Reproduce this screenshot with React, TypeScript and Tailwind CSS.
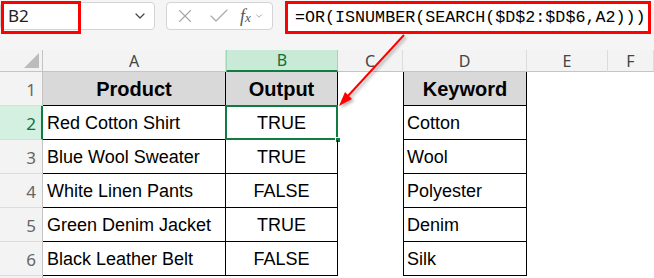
import { ChevronDown, X, Check } from 'lucide-react';

type Row = { product: string; output: string; keyword: string };

const rows: Row[] = [
  { product: 'Red Cotton Shirt', output: 'TRUE', keyword: 'Cotton' },
  { product: 'Blue Wool Sweater', output: 'TRUE', keyword: 'Wool' },
  { product: 'White Linen Pants', output: 'FALSE', keyword: 'Polyester' },
  { product: 'Green Denim Jacket', output: 'TRUE', keyword: 'Denim' },
  { product: 'Black Leather Belt', output: 'FALSE', keyword: 'Silk' },
];

const ui = { fontFamily: '"Noto Sans", "Open Sans", sans-serif' };
const cell = { fontFamily: '"Liberation Sans", Arial, sans-serif' };
const mono = { fontFamily: '"Liberation Mono", "DejaVu Sans Mono", monospace' };

function Toolbar() {
  return (
    <div className="flex h-[50px] items-start bg-[#f5f5f5] pt-[2px]" style={ui}>
      <div className="relative flex h-[28px] w-[155px] items-center justify-between rounded-[4px] border border-[#d4d4d4] bg-white pl-[7px] pr-[6px]">
        <span className="text-[17px] text-[#222]">B2</span>
        <ChevronDown className="h-[16px] w-[16px] text-[#444]" strokeWidth={1.8} />
        <div className="absolute left-0 top-[-2px] h-[33px] w-[80px] border-[3px] border-[#ff0000]" />
      </div>
      <div className="ml-[11px] flex h-[28px] w-[107px] items-center rounded-[4px] border border-[#d4d4d4] bg-white pl-[7px]">
        <X className="h-[22px] w-[22px] text-[#a6a6a6]" strokeWidth={1.2} />
        <Check className="ml-[11px] h-[24px] w-[24px] text-[#a6a6a6]" strokeWidth={1.1} />
        <span className="ml-[9px] text-[18px] italic text-[#555]" style={{ fontFamily: '"Liberation Serif", serif' }}>
          f<span className="text-[13px]">x</span>
        </span>
        <ChevronDown className="ml-[3px] h-[10px] w-[10px] text-[#999]" strokeWidth={2} />
      </div>
      <div className="ml-[12px] flex h-[33px] w-[366px] -translate-y-[1px] items-center border-[3px] border-[#ff0000] bg-white pl-[7px]">
        <span className="text-[16.7px] text-black" style={mono}>=OR(ISNUMBER(SEARCH($D$2:$D$6,A2)))</span>
      </div>
    </div>
  );
}

function ColumnHeaders() {
  const letters = ['A', 'B', 'C', 'D', 'E', 'F'];
  return (
    <>
      <div className="relative h-[22px] border-b border-r border-[#c4c4c4] bg-[#f3f3f3]">
        <div className="absolute right-[3px] bottom-[3px] h-0 w-0 border-b-[15px] border-l-[15px] border-b-[#bcbcbc] border-l-transparent" />
      </div>
      {letters.map((l) =>
        l === 'B' ? (
          <div
            key={l}
            className="flex h-[22px] items-center justify-center border-x border-b-2 border-x-[#9fd8b8] border-b-[#107c41] bg-[#caead8] text-[16px] text-[#0f703b]"
            style={ui}
          >
            {l}
          </div>
        ) : (
          <div
            key={l}
            className="flex h-[22px] items-center justify-center border-b border-r border-b-[#c4c4c4] border-r-[#dcdcdc] bg-[#f3f3f3] text-[16px] text-[#444]"
            style={ui}
          >
            {l}
          </div>
        ),
      )}
    </>
  );
}

function RowHeader({ n, active }: { n: number; active?: boolean }) {
  return (
    <div
      className={
        active
          ? 'flex h-[34px] items-center justify-end border-b border-r-2 border-b-[#dcdcdc] border-r-[#107c41] bg-[#d3f0e0] pr-[5px] pt-[2px] text-[17px] text-[#0f703b]'
          : 'flex h-[34px] items-center justify-end border-b border-r border-b-[#dcdcdc] border-r-[#c4c4c4] bg-[#f3f3f3] pr-[6px] pt-[2px] text-[17px] text-[#666]'
      }
      style={ui}
    >
      {n}
    </div>
  );
}

function Arrow() {
  return (
    <svg className="pointer-events-none absolute inset-0" width={654} height={278} viewBox="0 0 654 278">
      <defs>
        <filter id="sh" x="-20%" y="-20%" width="140%" height="140%">
          <feDropShadow dx="2" dy="2" stdDeviation="1.5" floodColor="#000" floodOpacity="0.3" />
        </filter>
      </defs>
      <g filter="url(#sh)">
        <line x1={404} y1={35} x2={347} y2={97} stroke="#ff0000" strokeWidth={2} />
        <polygon points="339,106 352,99 345,92" fill="#ff0000" />
      </g>
    </svg>
  );
}

export default function App() {
  return (
    <div className="relative h-[278px] w-[654px] overflow-hidden bg-white">
      <Toolbar />
      <div className="grid grid-cols-[43px_183px_112px_65px_124px_81px_1fr]">
        <ColumnHeaders />

        <RowHeader n={1} />
        <div className="flex h-[34px] items-center justify-center border-b border-r border-black bg-[#d9d9d9] pt-[1px] text-[20px] font-bold text-black" style={cell}>
          Product
        </div>
        <div className="flex h-[34px] items-center justify-center border-b border-r border-black bg-[#d9d9d9] pt-[1px] text-[20px] font-bold text-black" style={cell}>
          Output
        </div>
        <div />
        <div className="flex h-[34px] items-center justify-center border-x border-b border-black bg-[#d9d9d9] pt-[1px] text-[20px] font-bold text-black" style={cell}>
          Keyword
        </div>
        <div />
        <div />

        {rows.map((r, i) => (
          <div key={r.product} className="contents">
            <RowHeader n={i + 2} active={i === 0} />
            <div className="flex h-[34px] items-center border-b border-r border-black pl-[4px] pt-[1px] text-[18px] text-black" style={cell}>
              {r.product}
            </div>
            <div className="relative flex h-[34px] items-center justify-center border-b border-r border-black pt-[1px] text-[18px] text-black" style={cell}>
              {r.output}
              {i === 0 && (
                <>
                  <div className="absolute -left-[1px] -top-[1px] h-[35px] w-[113px] border-2 border-[#107c41]" />
                  <div className="absolute -bottom-[4px] -right-[4px] h-[6px] w-[6px] border border-white bg-[#107c41]" />
                </>
              )}
            </div>
            <div />
            <div className="flex h-[34px] items-center border-x border-b border-black pl-[3px] pt-[1px] text-[18px] text-black" style={cell}>
              {r.keyword}
            </div>
            <div />
            <div />
          </div>
        ))}

        <div className="h-[10px] border-r border-[#c4c4c4] bg-[#f3f3f3]" />
      </div>
      <Arrow />
    </div>
  );
}
